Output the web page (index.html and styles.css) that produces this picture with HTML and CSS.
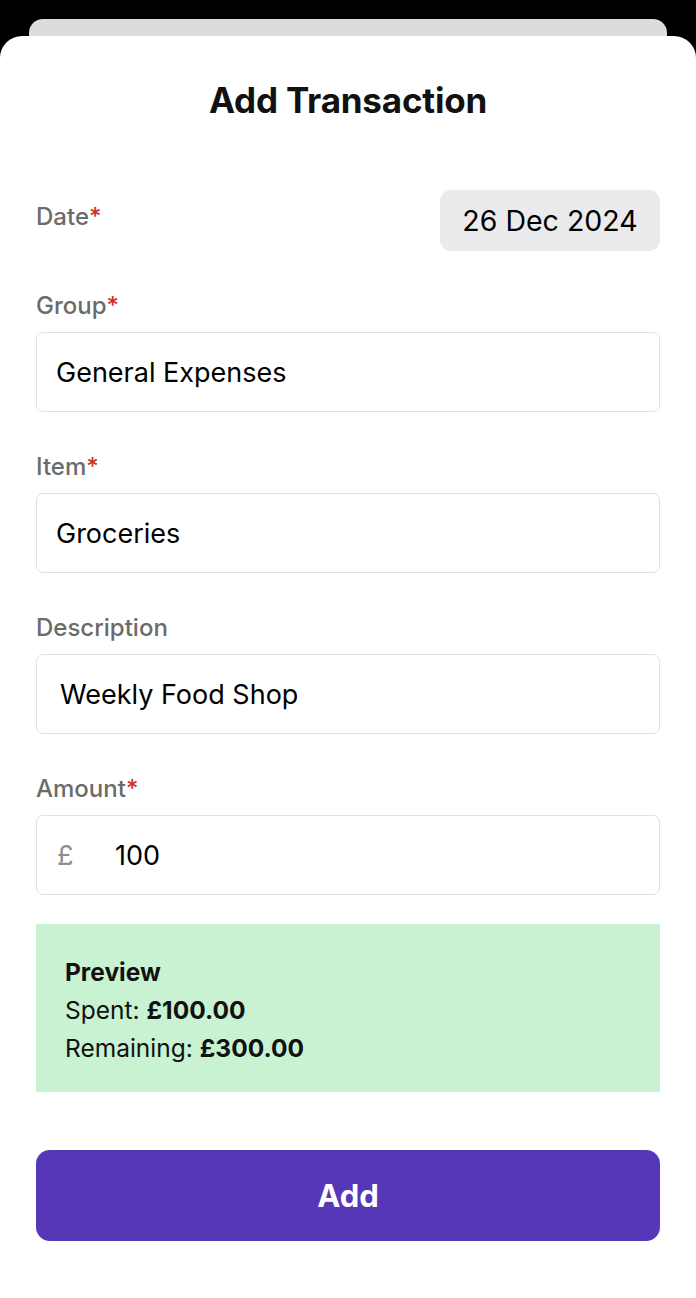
FILE: index.html
```html
<!DOCTYPE html>
<html lang="en">
<head>
<meta charset="utf-8">
<title>Add Transaction</title>
<link rel="stylesheet" href="styles.css">
</head>
<body>
<div class="back-sheet"></div>
<main class="sheet">
  <h1 class="title">Add Transaction</h1>

  <div class="date-row">
    <span class="label">Date<span class="req">*</span></span>
    <span class="date-pill">26 Dec 2024</span>
  </div>

  <div class="field">
    <div class="label">Group<span class="req">*</span></div>
    <div class="input"><span class="value">General Expenses</span></div>
  </div>

  <div class="field">
    <div class="label">Item<span class="req">*</span></div>
    <div class="input"><span class="value">Groceries</span></div>
  </div>

  <div class="field">
    <div class="label">Description</div>
    <div class="input input-desc"><span class="value">Weekly Food Shop</span></div>
  </div>

  <div class="field field-last">
    <div class="label">Amount<span class="req">*</span></div>
    <div class="input input-amount"><span class="currency">£</span><span class="value">100</span></div>
  </div>

  <section class="preview">
    <div class="preview-title">Preview</div>
    <div class="preview-line">Spent: <b>£100.00</b></div>
    <div class="preview-line">Remaining: <b>£300.00</b></div>
  </section>

  <button class="add-btn" type="button">Add</button>
</main>
</body>
</html>
```

FILE: styles.css
```css
html, body {
  margin: 0;
  padding: 0;
}
body {
  background: #000;
  font-family: Inter, "Noto Sans", "Liberation Sans", sans-serif;
  color: #000;
  height: 1298px;
  overflow: hidden;
}
.back-sheet {
  margin: 19px 29px 0;
  height: 17px;
  background: #dcdcdc;
  border-radius: 14px 14px 0 0;
}
.sheet {
  background: #fff;
  border-radius: 22px 22px 0 0;
  min-height: 1262px;
  padding: 0 36px;
  box-sizing: border-box;
}
.title {
  margin: 0;
  padding-top: 44px;
  line-height: 40px;
  font-size: 35px;
  font-weight: 700;
  text-align: center;
  color: #111;
  letter-spacing: -0.2px;
}
.date-row {
  display: flex;
  justify-content: space-between;
  align-items: flex-start;
  margin-top: 70px;
}
.date-row .label {
  margin-top: 13px;
}
.label {
  font-size: 24px;
  line-height: 28px;
  color: #6b6b6b;
  font-weight: 500;
}
.req {
  color: #d0312d;
}
.date-pill {
  display: flex;
  align-items: center;
  justify-content: center;
  width: 220px;
  height: 61px;
  background: #ebebed;
  border-radius: 11px;
  font-size: 28.5px;
  color: #000;
}
.field {
  margin-top: 41px;
}
.field + .field {
  margin-top: 41px;
}
.input {
  margin-top: 12px;
  height: 80px;
  box-sizing: border-box;
  border: 1.5px solid #dfe1ea;
  border-radius: 7px;
  display: flex;
  align-items: center;
  padding-left: 19px;
  font-size: 27px;
  color: #000;
}
.input-desc {
  padding-left: 23px;
}
.input-amount {
  padding-left: 20px;
}
.currency {
  color: #8e8e93;
  width: 58px;
}
.preview {
  margin-top: 29px;
  background: #c8f2d2;
  padding: 29px 29px 25px;
  font-size: 24.5px;
  line-height: 38px;
  color: #111;
}
.preview-title {
  font-weight: 700;
}
.preview-line b {
  font-weight: 700;
}
.add-btn {
  display: block;
  width: 100%;
  margin-top: 58px;
  height: 91px;
  border: none;
  border-radius: 14px;
  background: #5537b8;
  color: #fff;
  font-family: Inter, "Noto Sans", "Liberation Sans", sans-serif;
  font-size: 31px;
  font-weight: 700;
  cursor: pointer;
}
```
